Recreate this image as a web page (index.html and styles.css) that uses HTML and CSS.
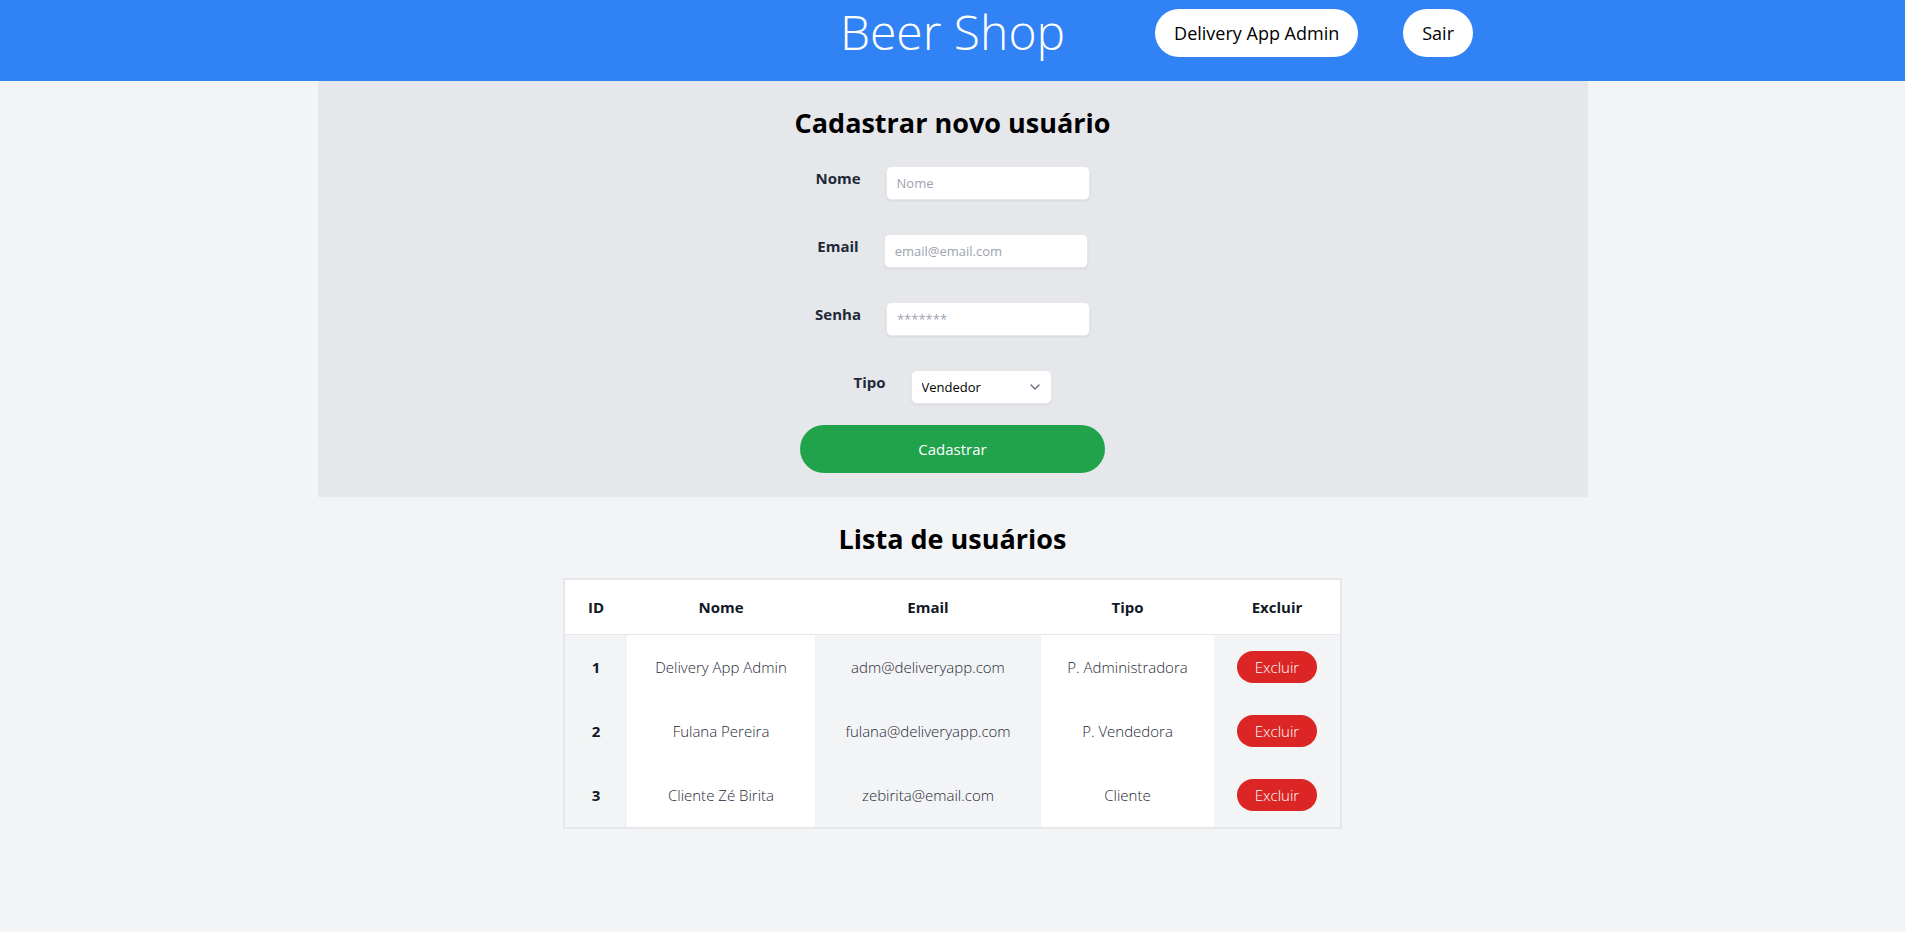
FILE: index.html
```html
<!DOCTYPE html>
<html lang="pt-BR">
<head>
<meta charset="utf-8">
<title>Beer Shop - Admin</title>
<link rel="stylesheet" href="styles.css">
</head>
<body>
<header class="topbar">
  <h1 class="brand">Beer Shop</h1>
  <nav class="topnav">
    <span class="pill">Delivery App Admin</span>
    <button class="pill" type="button">Sair</button>
  </nav>
</header>
<main class="page">
  <section class="register">
    <h2 class="section-title">Cadastrar novo usuário</h2>
    <form class="register-form">
      <div class="fields">
        <label class="field">
          <span class="field-label">Nome</span>
          <input class="field-input" type="text" placeholder="Nome">
        </label>
        <label class="field">
          <span class="field-label">Email</span>
          <input class="field-input" type="email" placeholder="email@email.com">
        </label>
        <label class="field">
          <span class="field-label">Senha</span>
          <input class="field-input" type="password" placeholder="*******">
        </label>
        <label class="field">
          <span class="field-label">Tipo</span>
          <span class="select-wrap">
            <select class="field-select">
              <option>Vendedor</option>
              <option>Cliente</option>
              <option>Administrador</option>
            </select>
            <svg class="select-chevron" width="10" height="6" viewBox="0 0 10 6" aria-hidden="true">
              <path d="M1 1l4 4 4-4" fill="none" stroke="#6b7280" stroke-width="1.5" stroke-linecap="round" stroke-linejoin="round"/>
            </svg>
          </span>
        </label>
      </div>
      <button class="submit" type="button">Cadastrar</button>
    </form>
  </section>

  <section class="users">
    <h2 class="section-title users-title">Lista de usuários</h2>
    <table class="users-table">
      <thead>
        <tr>
          <th class="col-id">ID</th>
          <th class="col-name">Nome</th>
          <th class="col-email">Email</th>
          <th class="col-type">Tipo</th>
          <th class="col-del">Excluir</th>
        </tr>
      </thead>
      <tbody>
        <tr>
          <td class="cell-id">1</td>
          <td>Delivery App Admin</td>
          <td>adm@deliveryapp.com</td>
          <td>P. Administradora</td>
          <td><button class="del-btn" type="button">Excluir</button></td>
        </tr>
        <tr>
          <td class="cell-id">2</td>
          <td>Fulana Pereira</td>
          <td>fulana@deliveryapp.com</td>
          <td>P. Vendedora</td>
          <td><button class="del-btn" type="button">Excluir</button></td>
        </tr>
        <tr>
          <td class="cell-id">3</td>
          <td>Cliente Zé Birita</td>
          <td>zebirita@email.com</td>
          <td>Cliente</td>
          <td><button class="del-btn" type="button">Excluir</button></td>
        </tr>
      </tbody>
    </table>
  </section>
</main>
</body>
</html>
```

FILE: styles.css
```css
* {
  box-sizing: border-box;
}

html, body {
  margin: 0;
  padding: 0;
}

body {
  background: #f3f4f6;
  font-family: "Open Sans", "Noto Sans", sans-serif;
  color: #111827;
  min-height: 932px;
}

/* Top bar */
.topbar {
  background: #3182f5;
  height: 81px;
  display: grid;
  grid-template-columns: 1fr auto 1fr;
  align-items: start;
  padding-top: 9px;
}

.brand {
  grid-column: 2;
  margin: -1px 0 0 0;
  font-size: 48px;
  font-weight: 300;
  line-height: 48px;
  color: #ffffff;
  white-space: nowrap;
}

.topnav {
  grid-column: 3;
  justify-self: start;
  display: flex;
  gap: 45px;
  margin-left: 90px;
}

.pill {
  height: 48px;
  border-radius: 24px;
  background: #ffffff;
  color: #000000;
  border: none;
  padding: 0 19px;
  display: flex;
  align-items: center;
  font-family: "Open Sans", sans-serif;
  font-size: 18px;
  white-space: nowrap;
}

/* Register panel */
.register {
  width: 66.6667%;
  margin: 0 auto;
  background: #e5e7eb;
  padding: 24px 0;
  display: flex;
  flex-direction: column;
  align-items: center;
}

.section-title {
  margin: 0;
  font-size: 27px;
  line-height: 36px;
  font-weight: 700;
  color: #000000;
  text-align: center;
}

.register .section-title {
  margin-bottom: 25px;
}

.register-form {
  display: flex;
  flex-direction: column;
  align-items: center;
}

.fields {
  display: flex;
  flex-direction: column;
  align-items: center;
  gap: 34px;
}

.field {
  display: flex;
  align-items: flex-start;
  gap: 25px;
}

.field-label {
  font-size: 15px;
  line-height: 24px;
  font-weight: 700;
  color: #1f2937;
}

.field-input {
  width: 204px;
  height: 34px;
  border: 1px solid #e5e7eb;
  border-radius: 5px;
  background: #ffffff;
  box-shadow: 0 1px 2px rgba(0, 0, 0, 0.08);
  padding: 0 10px;
  font-family: "Open Sans", sans-serif;
  font-size: 13px;
  color: #111827;
  outline: none;
}

.field-input::placeholder {
  color: #9ca3af;
}

.select-wrap {
  position: relative;
  display: block;
}

.field-select {
  width: 141px;
  height: 34px;
  -webkit-appearance: none;
  appearance: none;
  border: 1px solid #e5e7eb;
  border-radius: 6px;
  background: #ffffff;
  box-shadow: 0 1px 2px rgba(0, 0, 0, 0.08);
  padding: 0 10px;
  font-family: "Open Sans", sans-serif;
  font-size: 13px;
  color: #000000;
  outline: none;
}

.select-chevron {
  position: absolute;
  right: 12px;
  top: 14px;
  pointer-events: none;
}

.submit {
  margin-top: 21px;
  width: 305px;
  height: 48px;
  border: none;
  border-radius: 24px;
  background: #21a34b;
  color: #ffffff;
  font-family: "Open Sans", sans-serif;
  font-size: 15px;
}

/* Users list */
.users {
  display: flex;
  flex-direction: column;
  align-items: center;
  padding-top: 24px;
}

.users-title {
  margin-bottom: 21px;
}

.users-table {
  width: 779px;
  table-layout: fixed;
  border-collapse: separate;
  border-spacing: 0;
  border: 2px solid #e5e7eb;
  background: #ffffff;
}

.users-table th {
  height: 55px;
  background: #ffffff;
  border-bottom: 1px solid #e5e7eb;
  font-size: 15px;
  font-weight: 700;
  color: #111827;
  text-align: center;
  padding: 0;
}

.col-id { width: 62px; }
.col-name { width: 188px; }
.col-email { width: 226px; }
.col-type { width: 173px; }
.col-del { width: 126px; }

.users-table td {
  height: 64px;
  padding: 0;
  text-align: center;
  font-size: 15px;
  font-weight: 300;
  color: #1f2937;
  background: #ffffff;
  white-space: nowrap;
}

.users-table td:nth-child(odd) {
  background: #f3f4f6;
}

.users-table td.cell-id {
  font-weight: 700;
  color: #111827;
}

.del-btn {
  width: 80px;
  height: 32px;
  border: none;
  border-radius: 16px;
  background: #dc2626;
  color: #ffffff;
  font-family: "Open Sans", sans-serif;
  font-size: 15px;
  font-weight: 300;
  padding: 0;
}
```
